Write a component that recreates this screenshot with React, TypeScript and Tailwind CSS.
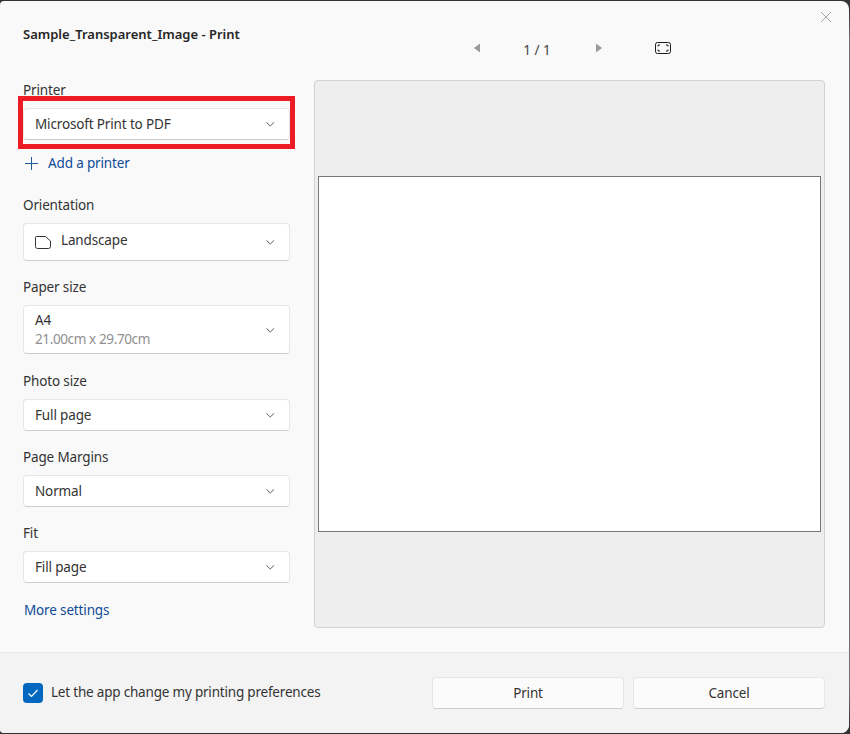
import React from "react";

const font = { fontFamily: '"Noto Sans", "Open Sans", sans-serif' };

function Chevron() {
  return (
    <svg width="10" height="10" viewBox="0 0 10 10" className="shrink-0" fill="none">
      <path d="M1.5 3.4 L5.25 7 L9 3.4" stroke="#5c5c5c" strokeWidth="1" />
    </svg>
  );
}

function Box({ className, children }: { className: string; children: React.ReactNode }) {
  return (
    <div className={`flex w-[267px] items-center justify-between rounded-[4px] border border-[#e6e6e6] border-b-[#cdcdcd] bg-white pl-[11px] pr-[14px] text-[13.5px] tracking-[-0.15px] text-[#333333] ${className}`}>
      <div>{children}</div>
      <Chevron />
    </div>
  );
}

function Label({ className, children }: { className: string; children: React.ReactNode }) {
  return <div className={`flex h-5 items-center text-[13.5px] tracking-[-0.15px] text-[#333333] ${className}`}>{children}</div>;
}

export default function App() {
  return (
    <div style={font} className="h-[734px] w-[850px] overflow-hidden bg-[linear-gradient(#333333_0_10px,#707070_40px,#707070_690px,#333333_725px)]">
      <div className="mt-px flex h-[732px] w-[849px] flex-col overflow-hidden rounded-tl-[4px] rounded-tr-[8px] rounded-br-[8px] rounded-bl-[4px] bg-[#f9f9f9]">
        <div className="relative flex flex-1">
          <div className="w-[314px] shrink-0 pl-[23px]">
            <div className="mt-[24px] flex h-5 items-center text-[13px] font-semibold text-[#262626]">Sample_Transparent_Image - Print</div>
            <Label className="mt-[35px]">Printer</Label>
            <div className="relative mt-[8px]">
              <Box className="h-[32px]">Microsoft Print to PDF</Box>
              <div className="absolute left-[-5px] top-[-12px] h-[53px] w-[277px] border-[5px] border-[#ed1c24]" />
            </div>
            <div className="mt-[13px] flex h-5 items-center gap-[10px] pl-[2px] text-[13.5px] tracking-[-0.15px] text-[#0f4c97]">
              <svg width="13" height="13" viewBox="0 0 13 13" fill="none">
                <path d="M6.5 0V13M0 6.5H13" stroke="#1f5a9e" strokeWidth="1" />
              </svg>
              Add a printer
            </div>
            <Label className="mt-[22px]">Orientation</Label>
            <Box className="mt-[8px] h-[38px]">
              <div className="flex items-center gap-[10px]">
                <svg width="16" height="13" viewBox="0 0 16 13" fill="none">
                  <path d="M1.5.5H10.5L15.5 5V10.5a2 2 0 0 1-2 2H2.5a2 2 0 0 1-2-2V1.5a1 1 0 0 1 1-1Z" stroke="#333333" strokeWidth="1" />
                </svg>
                <span className="pb-[4px]">Landscape</span>
              </div>
            </Box>
            <Label className="mt-[16px]">Paper size</Label>
            <Box className="mt-[8px] h-[49px]">
              <div className="leading-[19px]">
                <div>A4</div>
                <div className="tracking-[-0.38px] text-[#8f8f8f]">21.00cm x 29.70cm</div>
              </div>
            </Box>
            <Label className="mt-[17px]">Photo size</Label>
            <Box className="mt-[8px] h-[32px]">Full page</Box>
            <Label className="mt-[16px]">Page Margins</Label>
            <Box className="mt-[8px] h-[32px]">Normal</Box>
            <Label className="mt-[16px]">Fit</Label>
            <Box className="mt-[8px] h-[32px]">Fill page</Box>
            <div className="mt-[17px] flex h-5 items-center pl-px text-[13.5px] tracking-[-0.15px] text-[#0f4c97]">More settings</div>
          </div>
          <div className="flex-1">
            <div className="flex h-[79px] items-start pl-[159px] pt-[38px]">
              <svg width="8" height="10" viewBox="0 0 8 10" className="mt-[4px]">
                <path d="M7 0.5V9.5L1 5Z" fill="#9a9a9a" />
              </svg>
              <div className="ml-[39px] mt-px w-[34px] text-center text-[13.5px] leading-5 text-[#444444]">1 / 1</div>
              <svg width="8" height="10" viewBox="0 0 8 10" className="ml-[41px] mt-[4px]">
                <path d="M1 0.5V9.5L7 5Z" fill="#9a9a9a" />
              </svg>
              <svg width="17" height="13" viewBox="0 0 17 13" fill="none" className="ml-[52px] mt-[3px]">
                <rect x="0.5" y="0.5" width="15" height="11" rx="2" stroke="#1a1a1a" />
                <path d="M3 4.5V3H5M11 3H13V4.5M13 7.5V9H11M5 9H3V7.5" stroke="#1a1a1a" strokeWidth="1" />
              </svg>
            </div>
            <div className="flex h-[548px] w-[511px] items-center justify-center rounded-[4px] border border-[#d2d2d2] bg-[#eeeeee]">
              <div className="h-[356px] w-[503px] border border-[#777777] bg-white" />
            </div>
          </div>
          <svg width="12" height="12" viewBox="0 0 12 12" fill="none" className="absolute right-[17px] top-[10px]">
            <path d="M1 1L11 11M11 1L1 11" stroke="#a8a8a8" strokeWidth="1" />
          </svg>
        </div>
        <div className="flex h-[81px] shrink-0 items-start border-t border-[#e8e8e8] bg-[#f3f3f3] pl-[23px]">
          <div className="mt-[30px] flex h-5 items-center text-[13.5px] tracking-[-0.2px] text-[#333333]">
            <div className="flex h-5 w-5 items-center justify-center rounded-[4px] bg-[#0067c0]">
              <svg width="12" height="12" viewBox="0 0 12 12" fill="none">
                <path d="M1.5 6.5L4.5 9.5L10.5 3" stroke="white" strokeWidth="1.2" />
              </svg>
            </div>
            <span className="ml-[8px] pb-[2px]">Let the app change my printing preferences</span>
          </div>
          <div className="ml-auto mr-[24px] mt-[24px] flex gap-[9px]">
            <div className="flex h-[32px] w-[192px] items-center justify-center rounded-[4px] border border-[#e6e6e6] border-b-[#cdcdcd] bg-[#fbfbfb] text-[13.5px] tracking-[-0.15px] text-[#333333]">Print</div>
            <div className="flex h-[32px] w-[192px] items-center justify-center rounded-[4px] border border-[#e6e6e6] border-b-[#cdcdcd] bg-[#fbfbfb] text-[13.5px] tracking-[-0.15px] text-[#333333]">Cancel</div>
          </div>
        </div>
      </div>
    </div>
  );
}
